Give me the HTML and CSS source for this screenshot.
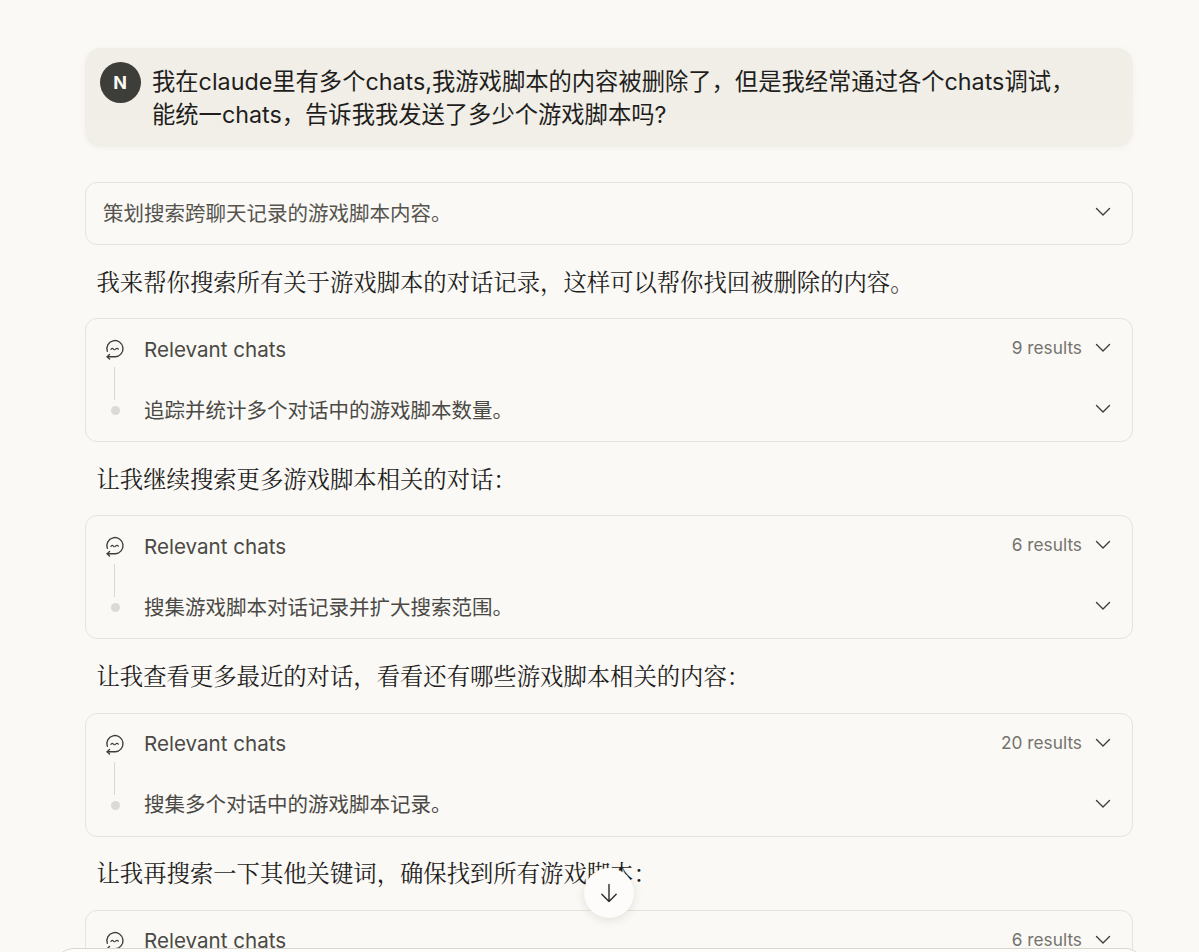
FILE: index.html
```html
<!DOCTYPE html>
<html lang="zh-CN">
<head>
    <meta charset="UTF-8">
    <title>Relevant chats</title>
    <link rel="stylesheet" href="styles.css">
</head>
<body>
    <svg class="icon-defs" width="0" height="0">
        <symbol id="chat-icon" viewBox="0.700 0 20 20">
            <path d="M2.900 11.800A7.700 7.700 0 1 1 10.400 16.900H2.800" fill="none" stroke="currentColor" stroke-width="1.300" stroke-linecap="round"/>
            <path d="M5 14.700L2.800 16.900L5 19.100" fill="none" stroke="currentColor" stroke-width="1.300" stroke-linecap="round" stroke-linejoin="round"/>
            <path d="M6.300 10C7.100 8.700 7.900 8.700 8.700 9.600C9.500 10.500 10.300 10.500 11 9.500C11.700 8.600 12.500 8.700 13.500 9.700" fill="none" stroke="currentColor" stroke-width="1.100" stroke-linecap="round"/>
        </symbol>
        <symbol id="chevron" viewBox="0 0 20 20">
            <path d="M3.500 6.500L10 13L16.500 6.500" fill="none" stroke="currentColor" stroke-width="1.400" stroke-linecap="round" stroke-linejoin="round"/>
        </symbol>
    </svg>

    <main class="chat">
        <div class="user-msg">
            <div class="avatar">N</div>
            <p class="user-text">我在claude里有多个chats,我游戏脚本的内容被删除了，但是我经常通过各个chats调试，<br>能统一chats，告诉我我发送了多少个游戏脚本吗?</p>
        </div>

        <div class="thinking">
            <span>策划搜索跨聊天记录的游戏脚本内容。</span>
            <svg class="chevron"><use href="#chevron"/></svg>
        </div>

        <p class="reply">我来帮你搜索所有关于游戏脚本的对话记录，这样可以帮你找回被删除的内容。</p>
        <div class="tool-card">
            <div class="tool-row">
                <div class="tool-mark"><svg class="chat-icon"><use href="#chat-icon"/></svg></div>
                <span class="tool-name">Relevant chats</span>
                <span class="tool-count">9 results</span>
                <svg class="chevron"><use href="#chevron"/></svg>
            </div>
            <div class="tool-row">
                <div class="tool-mark"><span class="line"></span><span class="dot"></span></div>
                <span class="tool-sub">追踪并统计多个对话中的游戏脚本数量。</span>
                <svg class="chevron"><use href="#chevron"/></svg>
            </div>
        </div>

        <p class="reply">让我继续搜索更多游戏脚本相关的对话：</p>
        <div class="tool-card">
            <div class="tool-row">
                <div class="tool-mark"><svg class="chat-icon"><use href="#chat-icon"/></svg></div>
                <span class="tool-name">Relevant chats</span>
                <span class="tool-count">6 results</span>
                <svg class="chevron"><use href="#chevron"/></svg>
            </div>
            <div class="tool-row">
                <div class="tool-mark"><span class="line"></span><span class="dot"></span></div>
                <span class="tool-sub">搜集游戏脚本对话记录并扩大搜索范围。</span>
                <svg class="chevron"><use href="#chevron"/></svg>
            </div>
        </div>

        <p class="reply">让我查看更多最近的对话，看看还有哪些游戏脚本相关的内容：</p>
        <div class="tool-card">
            <div class="tool-row">
                <div class="tool-mark"><svg class="chat-icon"><use href="#chat-icon"/></svg></div>
                <span class="tool-name">Relevant chats</span>
                <span class="tool-count">20 results</span>
                <svg class="chevron"><use href="#chevron"/></svg>
            </div>
            <div class="tool-row">
                <div class="tool-mark"><span class="line"></span><span class="dot"></span></div>
                <span class="tool-sub">搜集多个对话中的游戏脚本记录。</span>
                <svg class="chevron"><use href="#chevron"/></svg>
            </div>
        </div>

        <p class="reply">让我再搜索一下其他关键词，确保找到所有游戏脚本：</p>
        <div class="tool-card">
            <div class="tool-row">
                <div class="tool-mark"><svg class="chat-icon"><use href="#chat-icon"/></svg></div>
                <span class="tool-name">Relevant chats</span>
                <span class="tool-count">6 results</span>
                <svg class="chevron"><use href="#chevron"/></svg>
            </div>
        </div>
    </main>

    <button class="scroll-down">
        <svg width="22" height="22" viewBox="0 0 22 22"><path d="M11 2.500V19.500M3.800 12.300L11 19.500L18.200 12.300" fill="none" stroke="#2b2b28" stroke-width="1.400" stroke-linecap="round" stroke-linejoin="round"/></svg>
    </button>
    <div class="composer"></div>
</body>
</html>
```

FILE: styles.css
```css
body {
    margin: 0;
    height: 100vh;
    overflow: hidden;
    position: relative;
    background: #faf9f5;
    color: #3d3d3a;
    font-family: Inter, "Noto Sans CJK SC", sans-serif;
}
.icon-defs {
    position: absolute;
}
.chat {
    display: flex;
    flex-direction: column;
    padding: 48px 66px 0 85px;
}

.user-msg {
    display: flex;
    gap: 11.5px;
    padding: 14px 40px 14px 14.5px;
    height: 99px;
    box-sizing: border-box;
    background: linear-gradient(to bottom, #f0eee6, #f1efe8);
    border-radius: 16px;
    box-shadow: 0 1px 6px rgba(90, 80, 50, 0.05);
}
.avatar {
    flex: none;
    width: 41px;
    height: 41px;
    border-radius: 50%;
    background: #3d3d3a;
    color: #faf9f5;
    font-size: 18px;
    font-weight: 700;
    display: flex;
    justify-content: center;
    align-items: center;
}
.user-text {
    margin: 3px 0 0;
    font-size: 23.3px;
    line-height: 33px;
    color: #1f1e1d;
}

.thinking {
    margin-top: 35px;
    height: 63px;
    box-sizing: border-box;
    padding: 0 19px 0 17px;
    display: flex;
    align-items: center;
    justify-content: space-between;
    border: 1px solid #e6e3da;
    border-radius: 12px;
    font-size: 20.5px;
    color: #55544f;
}
.thinking span {
    margin-top: -4px;
}

.reply {
    margin: 0;
    padding: 0 0 2px 11.5px;
    box-sizing: border-box;
    height: 73.2px;
    display: flex;
    align-items: center;
    font-family: "Noto Serif CJK SC", "Noto Sans CJK SC", serif;
    font-size: 23.35px;
    color: #1f1e1d;
}

.tool-card {
    border: 1px solid #e6e3da;
    border-radius: 12px;
    height: 124px;
    box-sizing: border-box;
    padding: 0 19px 0 18px;
    display: flex;
    flex-direction: column;
}
.tool-row {
    height: 61px;
    flex: none;
    display: flex;
    align-items: center;
}
.tool-mark {
    width: 22px;
    height: 100%;
    margin-right: 18px;
    display: flex;
    justify-content: center;
    align-items: center;
    position: relative;
}
.chat-icon {
    width: 21px;
    height: 21px;
    color: #3d3d3a;
}
.line {
    position: absolute;
    top: -13px;
    left: 10px;
    width: 1px;
    height: 33px;
    background: #d9d7d0;
}
.dot {
    width: 9px;
    height: 9px;
    border-radius: 50%;
    background: #dcdad4;
}
.tool-name {
    font-size: 20.6px;
    flex: 1;
    margin-top: -1px;
    color: #4a4945;
}
.tool-sub {
    font-size: 20.5px;
    flex: 1;
    margin-top: -4px;
    color: #4a4945;
}
.tool-count {
    font-size: 17.3px;
    color: #75736d;
    margin-top: -4px;
    margin-right: 11px;
}
.chevron {
    flex: none;
    width: 20px;
    height: 20px;
    margin-top: -3px;
    color: #3d3d3a;
}

.scroll-down {
    position: absolute;
    left: 584px;
    top: 868px;
    width: 50px;
    height: 50px;
    padding: 0;
    border: none;
    border-radius: 50%;
    background: #fdfcfa;
    box-shadow: 0 2px 10px rgba(60, 50, 30, 0.12);
    display: flex;
    justify-content: center;
    align-items: center;
}
.composer {
    position: absolute;
    left: 54px;
    right: 54px;
    top: 948px;
    height: 60px;
    background: #fdfdfb;
    border: 1px solid #d9d7d0;
    border-radius: 20px;
}
```
